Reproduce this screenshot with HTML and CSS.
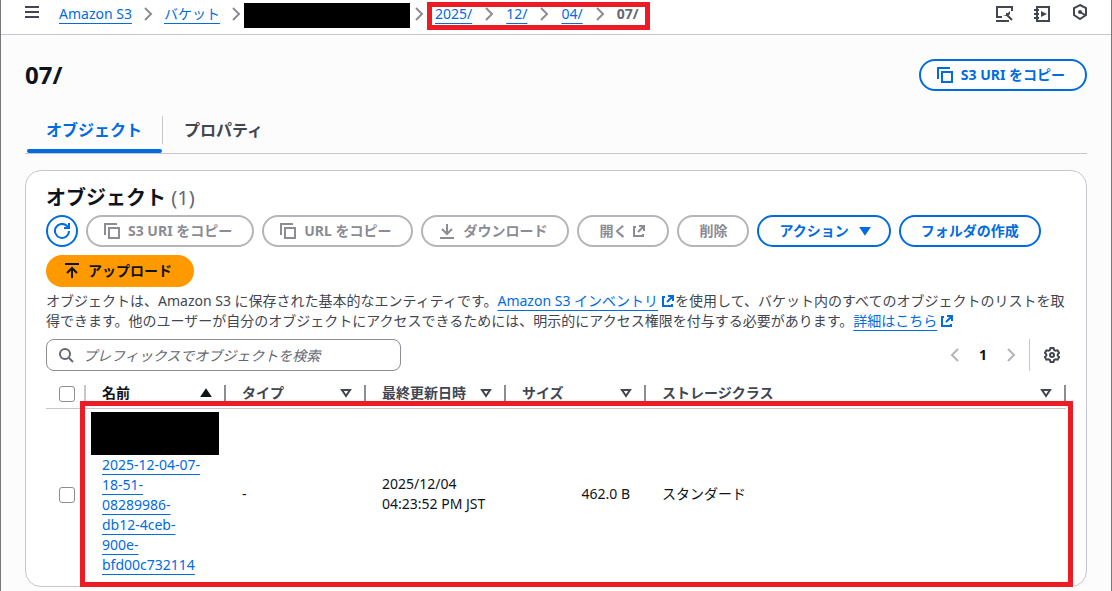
FILE: index.html
```html
<!DOCTYPE html>
<html lang="ja">
<head>
  <meta charset="UTF-8">
  <title>07/ - S3 バケット</title>
  <link rel="stylesheet" href="styles.css">
</head>
<body>
  <!-- Shared icons -->
  <svg class="sprite" aria-hidden="true">
    <symbol id="chevron" viewBox="0 0 16 16"><path d="M5 2l6 6-6 6"/></symbol>
    <symbol id="chevron-left" viewBox="0 0 16 16"><path d="M11 2L5 8l6 6"/></symbol>
    <symbol id="copy" viewBox="0 0 16 16"><path d="M1 12V1h12M5 5h10v10H5z"/></symbol>
    <symbol id="external" viewBox="0 0 14 14"><path d="M7 2h5v5M12 2L6 8M4 3H2v9h9v-2"/></symbol>
    <symbol id="sort" viewBox="0 0 16 16"><path d="M4 5h8l-4 6z"/></symbol>
  </svg>

  <header class="topbar">
    <button class="icon-btn menu" aria-label="メニュー">
      <svg class="icon" viewBox="0 0 16 16"><path d="M0 3h14M0 8h14M0 13h14"/></svg>
    </button>
    <nav class="crumbs" aria-label="パンくず">
      <a href="#">Amazon S3</a>
      <svg class="icon"><use href="#chevron"/></svg>
      <a href="#">バケット</a>
      <svg class="icon"><use href="#chevron"/></svg>
      <span class="redacted bucket"></span>
      <svg class="icon"><use href="#chevron"/></svg>
      <div class="crumbs path">
        <a href="#">2025/</a>
        <svg class="icon"><use href="#chevron"/></svg>
        <a href="#">12/</a>
        <svg class="icon"><use href="#chevron"/></svg>
        <a href="#">04/</a>
        <svg class="icon"><use href="#chevron"/></svg>
        <b>07/</b>
      </div>
    </nav>
    <div class="tools">
      <button class="icon-btn" aria-label="ツール">
        <svg viewBox="0 0 18 18"><path d="M7 12H2V2h15v4M1 16h13M17 15l-5-5"/><path class="dot" d="M8 11h5l2-2V6l-2 2h-2v2z"/></svg>
      </button>
      <button class="icon-btn" aria-label="チュートリアル">
        <svg viewBox="0 0 18 18"><path d="M4 2h12v14H4zM1 5h5M1 9h5M1 13h5"/><path class="dot" d="M8 6l6 3-6 3z"/></svg>
      </button>
      <button class="icon-btn raised" aria-label="情報">
        <svg viewBox="0 0 18 18"><path d="M9 2l6 3v7l-6 4-6-4V5zM9 9l5 3"/><circle class="dot" cx="9" cy="9" r="2"/></svg>
      </button>
    </div>
  </header>

  <main>
    <div class="title-row">
      <h1>07/</h1>
      <button class="btn"><svg class="icon lead"><use href="#copy"/></svg>S3 URI をコピー</button>
    </div>

    <nav class="tabs">
      <a href="#" class="tab active">オブジェクト</a>
      <a href="#" class="tab">プロパティ</a>
    </nav>

    <section class="card">
      <h2>オブジェクト <span>(1)</span></h2>
      <div class="actions">
        <button class="btn round" aria-label="更新">
          <svg class="icon" viewBox="0 0 16 16"><path d="M15 8a7 7 0 1 1-2-5l2 2M15 0v5h-5"/></svg>
        </button>
        <button class="btn" disabled><svg class="icon lead"><use href="#copy"/></svg>S3 URI をコピー</button>
        <button class="btn" disabled><svg class="icon lead"><use href="#copy"/></svg>URL をコピー</button>
        <button class="btn" disabled><svg class="icon lead" viewBox="0 0 16 16"><path d="M8 1v10M3 6l5 5 5-5M1 15h14"/></svg>ダウンロード</button>
        <button class="btn" disabled>開く<svg class="icon ext"><use href="#external"/></svg></button>
        <button class="btn" disabled>削除</button>
        <button class="btn">アクション<svg class="icon trail solid"><use href="#sort"/></svg></button>
        <button class="btn">フォルダの作成</button>
        <button class="btn primary"><svg class="icon lead" viewBox="0 0 16 16"><path d="M1 1h14M8 15V5M3 10l5-5 5 5"/></svg>アップロード</button>
      </div>
      <p class="desc">オブジェクトは、Amazon S3 に保存された基本的なエンティティです。<a href="#">Amazon S3 インベントリ</a><svg class="icon ext"><use href="#external"/></svg>を使用して、バケット内のすべてのオブジェクトのリストを取得できます。他のユーザーが自分のオブジェクトにアクセスできるためには、明示的にアクセス権限を付与する必要があります。<a href="#">詳細はこちら</a><svg class="icon ext"><use href="#external"/></svg></p>

      <div class="filter-row">
        <div class="search">
          <svg class="icon" viewBox="0 0 16 16"><circle cx="7" cy="7" r="5"/><path d="M11 11l4 4"/></svg>
          <input type="text" aria-label="オブジェクトを検索" placeholder="プレフィックスでオブジェクトを検索">
        </div>
        <div class="pager">
          <button class="icon-btn page" aria-label="前へ"><svg class="icon"><use href="#chevron-left"/></svg></button>
          <b>1</b>
          <button class="icon-btn page" aria-label="次へ"><svg class="icon"><use href="#chevron"/></svg></button>
        </div>
        <button class="icon-btn settings" aria-label="設定">
          <svg class="icon" viewBox="0 0 16 16"><path d="M6.500 1h3l.6 2 1.500.8 2-.5 1.500 2.600L13.700 7.300v1.400l1.400 1.400-1.500 2.600-2-.5-1.500.8-.6 2h-3l-.6-2-1.500-.8-2 .5L.9 10.100l1.400-1.400V7.300L.9 5.900l1.500-2.600 2 .5L5.900 3z"/><circle cx="8" cy="8" r="2"/></svg>
        </button>
      </div>

      <div class="table-wrap">
        <table>
          <thead>
            <tr>
              <th class="check"><input type="checkbox" aria-label="すべて選択"></th>
              <th class="col sorted"><div>名前<svg class="icon up solid"><use href="#sort"/></svg></div></th>
              <th class="col"><div>タイプ<svg class="icon"><use href="#sort"/></svg></div></th>
              <th class="col"><div>最終更新日時<svg class="icon"><use href="#sort"/></svg></div></th>
              <th class="col"><div>サイズ<svg class="icon"><use href="#sort"/></svg></div></th>
              <th><div>ストレージクラス<svg class="icon"><use href="#sort"/></svg></div></th>
            </tr>
          </thead>
          <tbody>
            <tr>
              <td class="check"><input type="checkbox" aria-label="オブジェクトを選択"></td>
              <td><span class="redacted key"></span><a href="#">2025-12-04-07-<br>18-51-<br>08289986-<br>db12-4ceb-<br>900e-<br>bfd00c732114</a></td>
              <td>-</td>
              <td>2025/12/04<br>04:23:52 PM JST</td>
              <td class="num">462.0 B</td>
              <td>スタンダード</td>
            </tr>
          </tbody>
        </table>
        <div class="row-mark"></div>
      </div>
    </section>
  </main>
</body>
</html>
```
FILE: styles.css
```css
* { box-sizing: border-box; }
body { margin: 0; min-height: 100vh; border: solid #77777c; border-width: 0 1px; background: #fcfcfd; color: #0f141a; font-family: "Noto Sans", "Noto Sans CJK JP", sans-serif; font-size: 14px; line-height: 20px; }
a { color: #006ce0; text-decoration: underline; text-decoration-thickness: 1px; text-underline-offset: 4px; text-decoration-skip-ink: none; }
h1, h2, p { margin: 0; }
svg { width: 18px; height: 18px; fill: none; stroke: currentColor; stroke-width: 2; flex: none; display: block; }
.sprite { position: absolute; width: 0; height: 0; }
.icon { width: 16px; height: 16px; }
.solid { fill: currentColor; }
.dot { fill: currentColor; stroke: none; }
.icon-btn { border: 0; padding: 0; background: none; color: #424650; cursor: pointer; }
.redacted { display: block; background: #000; }

/* Top bar */
.topbar { display: flex; justify-content: space-between; height: 35px; padding: 0 22px 6px 24px; background: #fff; border-bottom: 1px solid #c6c6cd; }
.menu { padding-bottom: 4px; }
.crumbs { display: flex; align-items: center; gap: 8px; flex: 1; }
.crumbs .icon { color: #8c8c94; }
.topbar > .crumbs { margin-left: 18px; }
.bucket { width: 166px; height: 25px; margin: 3px -7px 0 -8px; }
.path { position: relative; flex: none; gap: 9px; color: #656871; }
.path::after { content: ""; position: absolute; inset: -2px -12px -6px -8px; border: 5px solid #ed1c24; pointer-events: none; }
.tools { display: flex; align-items: center; gap: 20px; }
.raised { padding-bottom: 4px; }

/* Page title and tabs */
main { padding: 24px 24px 0; }
.title-row { display: flex; justify-content: space-between; align-items: center; }
h1 { font-size: 24px; line-height: 32px; }
.tabs { display: flex; margin-top: 16px; border-bottom: 1px solid #c6c6cd; }
.tab { position: relative; padding: 11px 21px; height: 46px; color: #424650; font-size: 16px; line-height: 24px; font-weight: bold; text-decoration: none; }
.tab.active { color: #006ce0; }
.tab.active::before { content: ""; position: absolute; right: 1px; bottom: 0; left: 2px; height: 4px; border-radius: 2px; background: #006ce0; }
.tab.active::after { content: ""; position: absolute; right: 0; top: 9px; height: 28px; border-right: 1px solid #c6c6cd; }

/* Buttons */
.btn { display: flex; align-items: center; height: 32px; padding: 0 20px; border: 2px solid #006ce0; border-radius: 16px; background: #fff; color: #006ce0; font: inherit; font-weight: bold; white-space: nowrap; cursor: pointer; }
.btn:disabled { border-color: #b4b4bb; color: #8c8c94; cursor: default; }
.btn.primary { border-color: #ff9900; background: #ff9900; color: #0f141a; }
.btn.round { padding: 0 6px; }
.lead { margin: 0 8px 0 -4px; }
.trail { margin: 0 -4px 0 8px; }
.ext { width: 14px; height: 14px; }
.btn .ext { margin: 0 1px 0 5px; }

/* Objects */
.card { margin-top: 16px; padding: 13px 20px 5px; background: #fff; border: 1px solid #c6c6cd; border-radius: 16px; }
h2 { font-size: 20px; line-height: 28px; }
h2 span { color: #656871; font-weight: normal; }
.actions { display: flex; flex-wrap: wrap; gap: 8px; margin-top: 3px; }
.desc { margin-top: 4px; color: #424650; }
.desc .ext { display: inline-block; margin: 0 0 0 3px; vertical-align: -2px; color: #006ce0; }
.filter-row { display: flex; align-items: center; margin-top: 8px; }
.search { position: relative; width: 355px; }
.search .icon { position: absolute; left: 12px; top: 8px; color: #656871; }
.search input { width: 100%; height: 32px; padding: 0 12px 0 36px; border: 1px solid #8c8c94; border-radius: 8px; font: inherit; display: block; }
.search input::placeholder { color: #656871; font-style: italic; }
.pager { display: flex; align-items: center; gap: 16px; margin-left: auto; padding-right: 10px; }
.page { color: #b4b4bb; }
.settings { height: 32px; padding: 0 6px 0 14px; border-left: 1px solid #c6c6cd; }

/* Table */
.table-wrap { position: relative; margin-top: 8px; }
table { width: 100%; border-collapse: separate; border-spacing: 0; table-layout: fixed; }
th { position: relative; height: 30px; padding: 0 12px 2px 16px; border-bottom: 1px solid #c6c6cd; color: #424650; text-align: left; vertical-align: middle; }
th div { display: flex; justify-content: space-between; align-items: center; }
th::after { content: ""; position: absolute; right: 0; top: 6px; height: 18px; border-right: 2px solid #8c8c94; }
th.check::after { border-color: #c6c6cd; }
td { padding: 3px 16px 6px; }
.check { width: 40px; padding: 0 0 0 13px; }
.col { width: 140px; }
.sorted { color: #0f141a; }
.up { transform: rotate(180deg); }
.num { text-align: right; }
.key { width: 128px; height: 43px; margin-left: -11px; }
input[type="checkbox"] { appearance: none; display: block; width: 16px; height: 16px; margin: 0; border: 1px solid #8c8c94; border-radius: 3px; background: #fff; }
.row-mark { position: absolute; inset: 22px -7px -6px 34px; border: 5px solid #ed1c24; pointer-events: none; }
```
